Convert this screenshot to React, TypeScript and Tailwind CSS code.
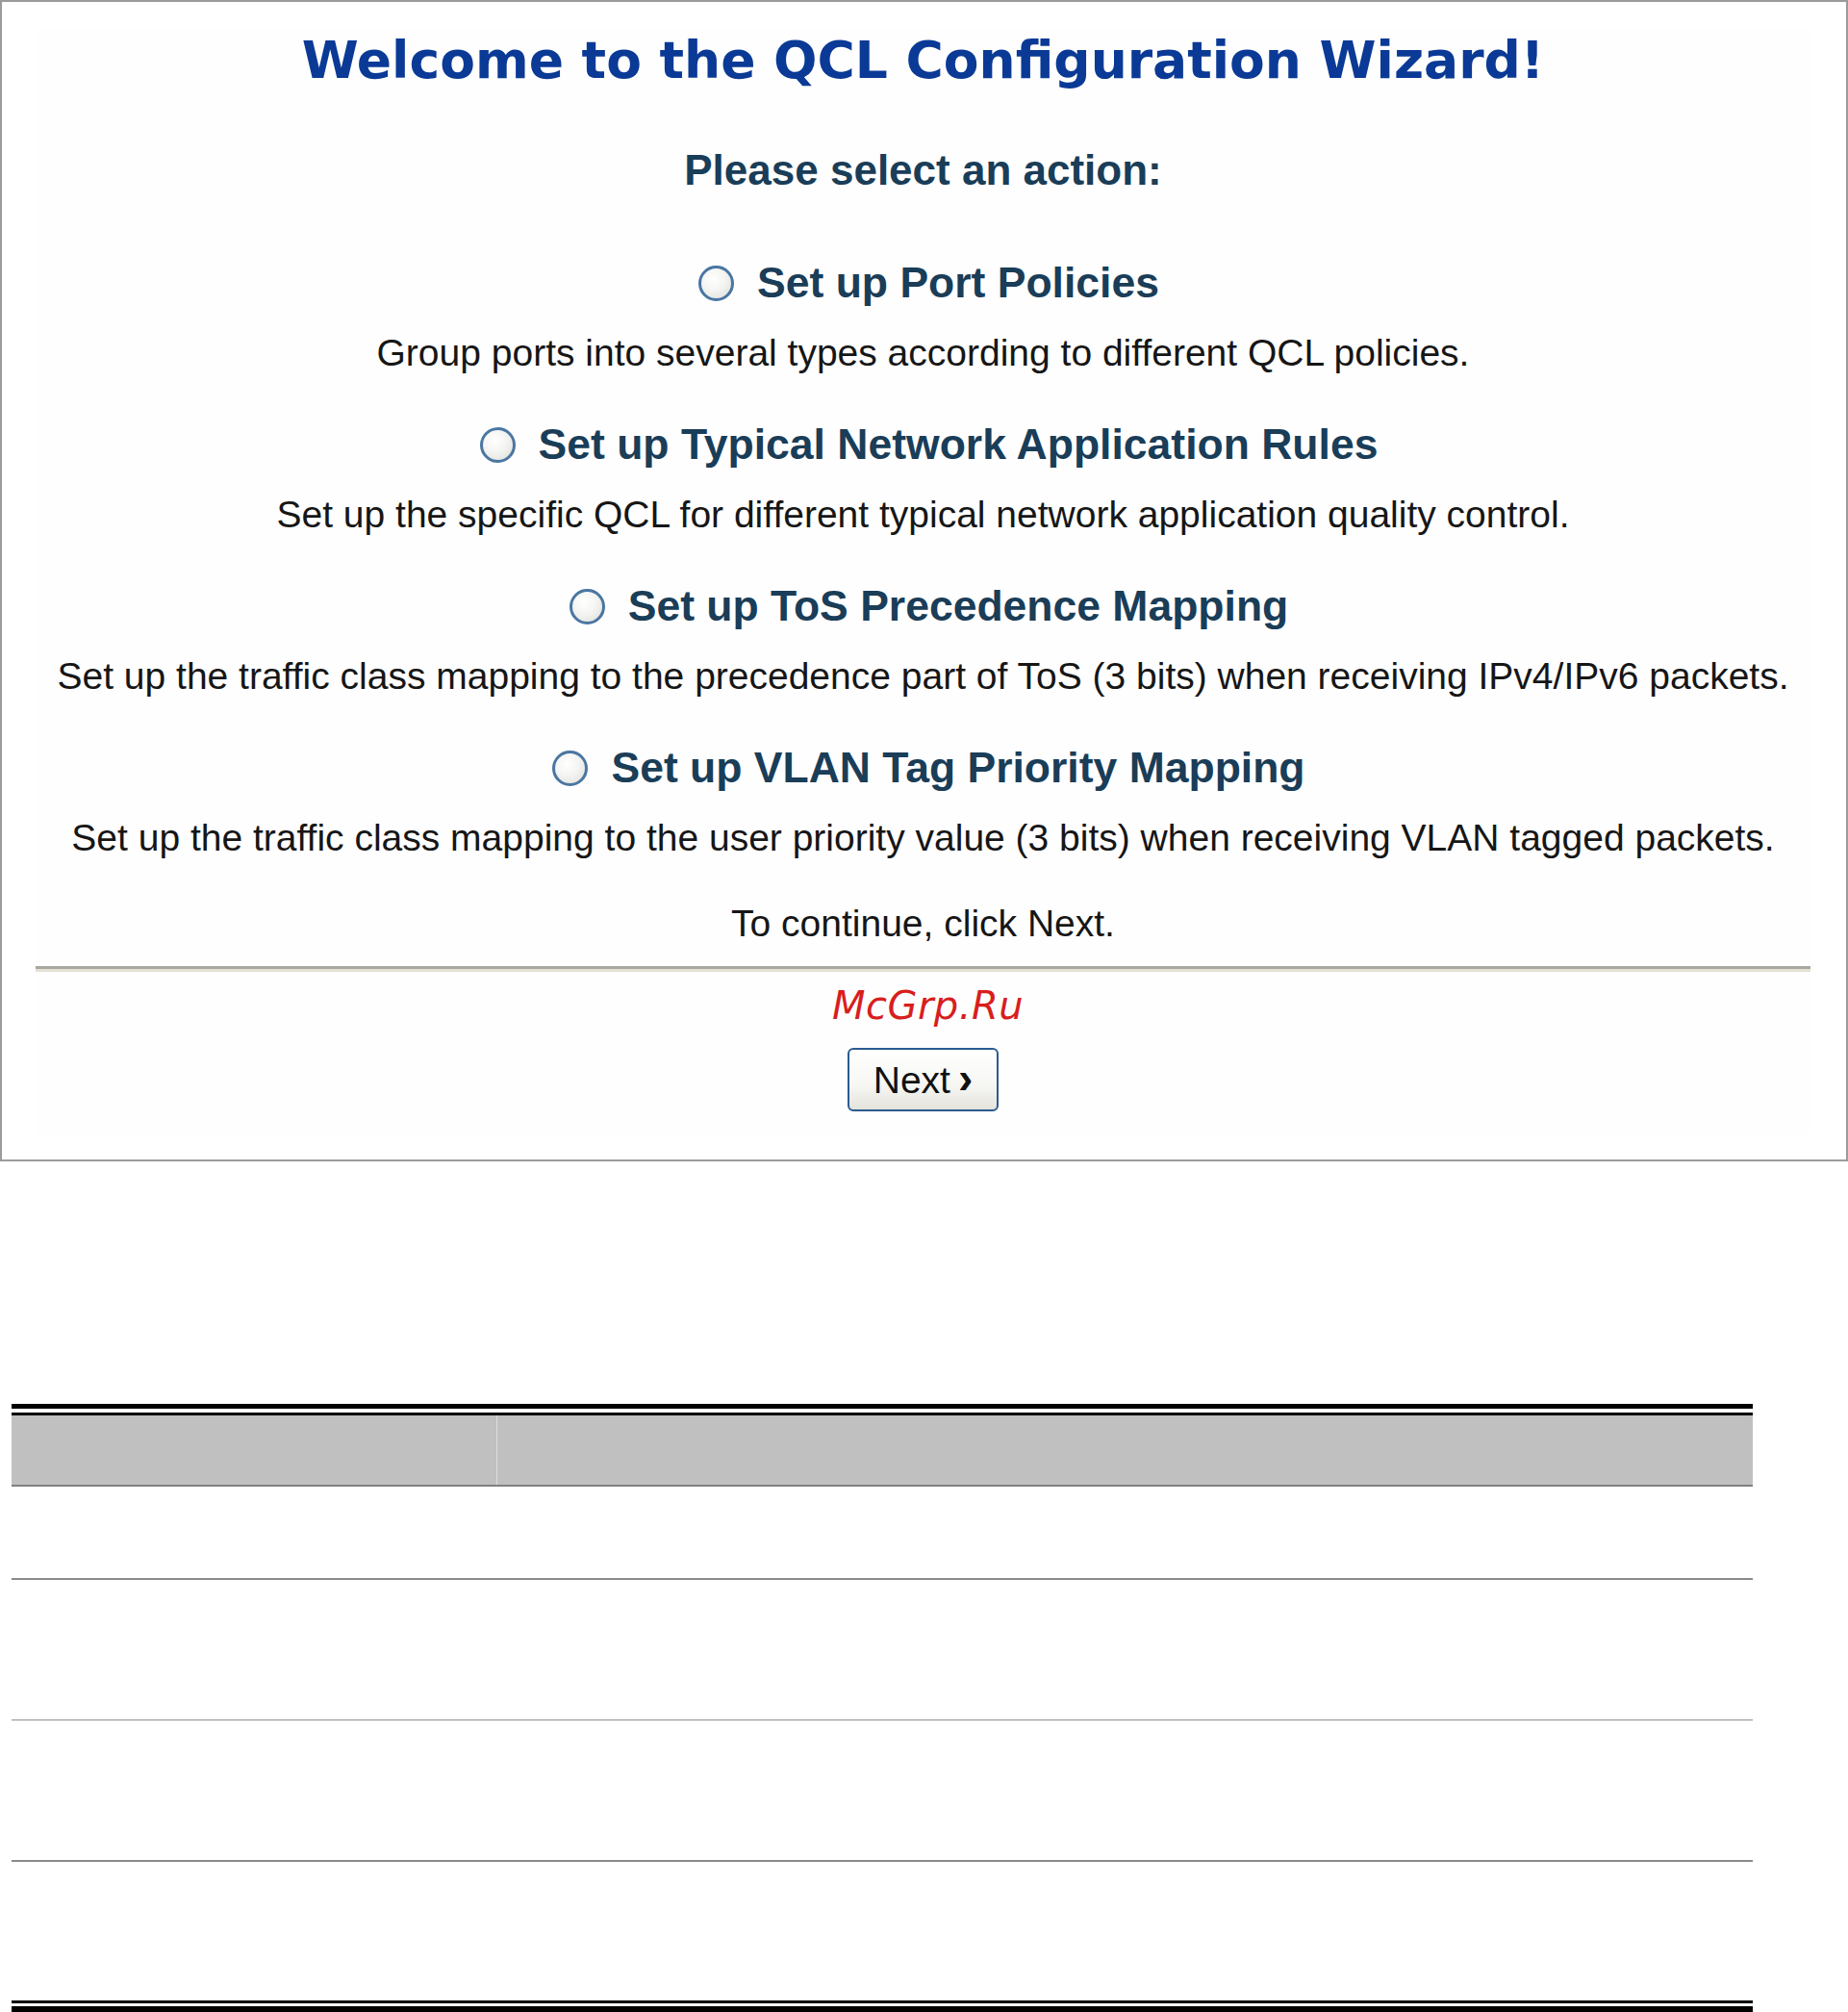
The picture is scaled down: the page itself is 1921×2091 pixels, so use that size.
import React from "react";

const opts = [
  {
    label: "Set up Port Policies",
    desc: "Group ports into several types according to different QCL policies.",
  },
  {
    label: "Set up Typical Network Application Rules",
    desc: "Set up the specific QCL for different typical network application quality control.",
  },
  {
    label: "Set up ToS Precedence Mapping",
    desc: "Set up the traffic class mapping to the precedence part of ToS (3 bits) when receiving IPv4/IPv6 packets.",
  },
  {
    label: "Set up VLAN Tag Priority Mapping",
    desc: "Set up the traffic class mapping to the user priority value (3 bits) when receiving VLAN tagged packets.",
  },
];

function Radio() {
  return (
    <span className="block w-[37px] h-[37px] shrink-0 rounded-full border-[3px] border-[#4a76a2] bg-[radial-gradient(circle_at_40%_35%,#ffffff_0%,#f4f4f2_45%,#dcdcd8_100%)]" />
  );
}

export default function App() {
  return (
    <div className="w-[1921px] bg-white">
      {/* Wizard box */}
      <div className="h-[1207px] border-2 border-[#9b9b9b] bg-white">
        <div className="mt-[27px] ml-[35px] mr-[37px] h-[1149px] bg-[#fefefe] flex flex-col items-center">
          <h1 className="mt-[9px] h-[50px] leading-[50px] text-[53.5px] font-bold text-[#0a3a96] font-['DejaVu_Sans',sans-serif] whitespace-nowrap">
            Welcome to the QCL Configuration Wizard!
          </h1>
          <div className="mt-[64px] h-[50px] leading-[50px] text-[44px] font-bold text-[#1a3d58] font-['Liberation_Sans',sans-serif] whitespace-nowrap">
            Please select an action:
          </div>
          {opts.map((o, i) => (
            <React.Fragment key={i}>
              <div
                className={
                  (i === 0 ? "mt-[67px] " : "mt-[45px] ") +
                  "h-[50px] flex items-center justify-center gap-[24px] pl-[12px]"
                }
              >
                <Radio />
                <span className="leading-[50px] text-[44.5px] font-bold text-[#1a3d58] font-['Liberation_Sans',sans-serif] whitespace-nowrap">
                  {o.label}
                </span>
              </div>
              <div className="mt-[23px] h-[50px] leading-[50px] text-[39px] text-[#161616] font-['Liberation_Sans',sans-serif] whitespace-nowrap">
                {o.desc}
              </div>
            </React.Fragment>
          ))}
          <div className="mt-[39px] h-[50px] leading-[50px] text-[39px] text-[#161616] font-['Liberation_Sans',sans-serif] whitespace-nowrap">
            To continue, click Next.
          </div>
          <div className="mt-[19px] w-full h-[6px] border-t-[3px] border-t-[#a9a89f] border-b-[3px] border-b-[#e2e1d3] bg-[#c9c8bd]" />
          <div className="mt-[10px] pl-[10px] h-[50px] leading-[50px] text-[40px] italic tracking-[0.5px] text-[#d81e1e] font-['DejaVu_Sans',sans-serif] whitespace-nowrap">
            McGrp.Ru
          </div>
          <button className="mt-[19px] w-[157px] h-[66px] rounded-[6px] border-2 border-[#2b5b90] bg-[linear-gradient(to_bottom,#ffffff_0%,#f6f6f3_60%,#e4e3dc_100%)] flex items-center justify-center gap-[8px] text-[#111] font-['Liberation_Sans',sans-serif]">
            <span className="text-[39px] leading-none">Next</span>
            <span className="text-[46px] font-bold leading-none -mt-[4px]">›</span>
          </button>
        </div>
      </div>

      {/* Table */}
      <div className="mt-[252px] ml-[12px] w-[1810px]">
        <div className="h-[5px] bg-black" />
        <div className="h-[4px] bg-white" />
        <div className="h-[3px] bg-black" />
        <div className="h-[74px] bg-[#c0c0c0] border-b-2 border-[#808080] grid grid-cols-[505px_1fr]">
          <div className="border-r border-[#dedede]" />
          <div />
        </div>
        <div className="h-[97px] border-b-[2px] border-[#8a8a8a]" />
        <div className="h-[146px] border-b border-[#909090]" />
        <div className="h-[147px] border-b-[2px] border-[#8a8a8a]" />
        <div className="h-[144px]" />
        <div className="h-[3px] bg-black" />
        <div className="h-[3px] bg-white" />
        <div className="h-[7px] bg-black" />
      </div>
    </div>
  );
}
